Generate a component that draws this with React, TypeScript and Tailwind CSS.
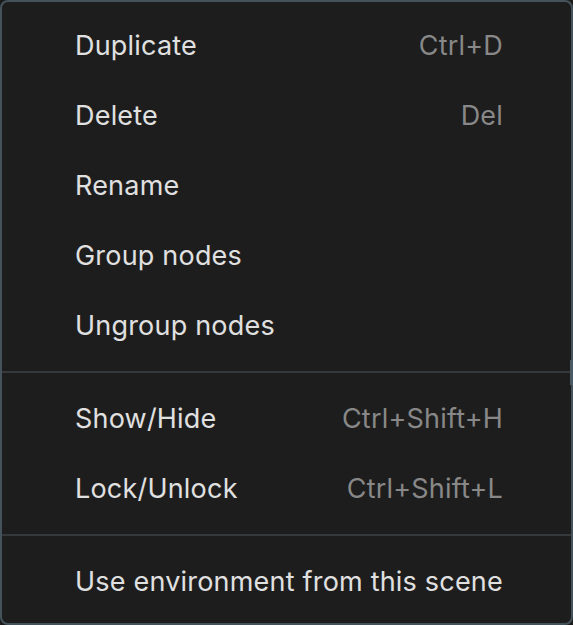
import React from "react";

type Item = { label: string; shortcut?: string };

const groups: Item[][] = [
  [
    { label: "Duplicate", shortcut: "Ctrl+D" },
    { label: "Delete", shortcut: "Del" },
    { label: "Rename" },
    { label: "Group nodes" },
    { label: "Ungroup nodes" },
  ],
  [
    { label: "Show/Hide", shortcut: "Ctrl+Shift+H" },
    { label: "Lock/Unlock", shortcut: "Ctrl+Shift+L" },
  ],
  [{ label: "Use environment from this scene" }],
];

export default function App() {
  return (
    <div className="w-[573px] h-[625px] bg-[#1c1c1c]" style={{ fontFamily: "Inter, 'Noto Sans', sans-serif" }}>
      <div className="relative flex h-[625px] w-[573px] flex-col rounded-lg border-2 border-[#44525b] bg-[#1d1d1d] pt-2">
        {groups.map((g, gi) => (
          <React.Fragment key={gi}>
            {gi > 0 && (
              <div className="flex h-[23px] items-center">
                <div className="h-[2px] w-full bg-[#35393c]" />
              </div>
            )}
            {g.map((it) => (
              <div key={it.label} className="flex h-[70px] items-center justify-between pl-[73px] pr-[68px] text-[27px] leading-none tracking-[0.2px]">
                <span className="text-[#e0e0e0]">{it.label}</span>
                {it.shortcut && <span className="text-[#888888]">{it.shortcut}</span>}
              </div>
            ))}
          </React.Fragment>
        ))}
        <div className="absolute right-[-2px] top-[358px] h-[25px] w-[3px] bg-[#4a5a64]" />
      </div>
    </div>
  );
}
